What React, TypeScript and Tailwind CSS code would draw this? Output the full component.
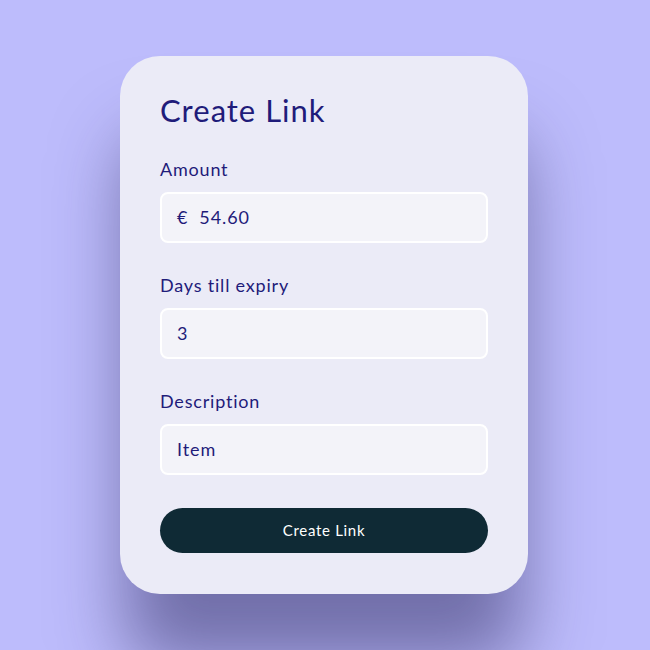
import React from "react";

function Field({ label, value }: { label: string; value: React.ReactNode }) {
  return (
    <div className="flex flex-col">
      <div className="text-[18px] leading-[24px] tracking-[0.8px] text-[#1f1c7a]">{label}</div>
      <div className="mt-[11px] h-[51px] rounded-[8px] border-2 border-white bg-[#f3f3f9] px-[15px] flex items-center text-[18px] tracking-[0.9px] text-[#1f1c7a]">
        {value}
      </div>
    </div>
  );
}

export default function App() {
  return (
    <div
      className="w-[650px] h-[650px] bg-[#bdbcfc] flex justify-start pl-[120px] pt-[56px] overflow-hidden"
      style={{ fontFamily: "Lato, 'Noto Sans', sans-serif" }}
    >
      <div className="w-[408px] h-[538px] shrink-0 rounded-[40px] bg-[#ebebf7] px-[40px] pt-[35px] shadow-[0_75px_70px_-5px_rgba(40,36,90,0.5)] flex flex-col">
        <h1 className="text-[31px] leading-[38px] tracking-[1px] text-[#1f1c7a] mb-[28px]">Create Link</h1>
        <div className="flex flex-col gap-[30px]">
          <Field label="Amount" value={<span>€&nbsp;&nbsp;54.60</span>} />
          <Field label="Days till expiry" value="3" />
          <Field label="Description" value="Item" />
        </div>
        <button className="mt-[33px] h-[45px] w-full rounded-full bg-[#0f2a35] text-white text-[15px] tracking-[0.7px]">
          Create Link
        </button>
      </div>
    </div>
  );
}
